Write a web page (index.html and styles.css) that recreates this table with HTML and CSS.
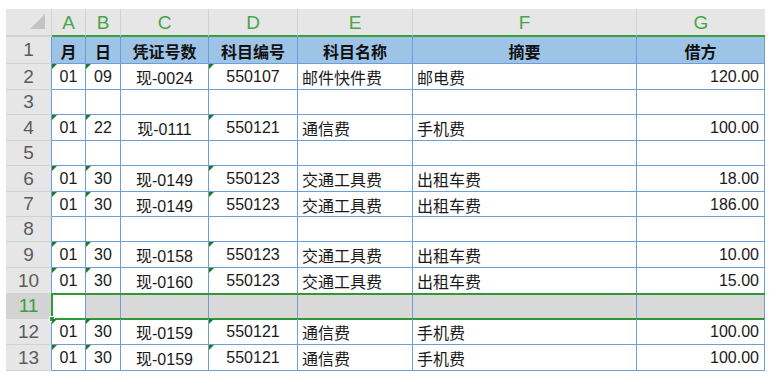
FILE: index.html
```html
<!DOCTYPE html>
<html lang="zh-CN">
<head>
<meta charset="utf-8">
<title>Sheet</title>
<link rel="stylesheet" href="styles.css">
</head>
<body>
<div class="sheet">
  <div class="row colhead">
    <div class="corner"><span class="corner-tri"></span></div>
    <div class="ch">A</div><div class="ch">B</div><div class="ch">C</div><div class="ch">D</div><div class="ch">E</div><div class="ch">F</div><div class="ch last">G</div>
  </div>

  <div class="row h27 title">
    <div class="rh">1</div>
    <div class="c ctr">月</div><div class="c ctr">日</div><div class="c ctr">凭证号数</div><div class="c ctr">科目编号</div><div class="c ctr">科目名称</div><div class="c ctr">摘要</div><div class="c ctr">借方</div>
  </div>

  <div class="row h26">
    <div class="rh">2</div>
    <div class="c ctr t">01</div><div class="c ctr t">09</div><div class="c ctr">现-0024</div><div class="c ctr t">550107</div><div class="c lft">邮件快件费</div><div class="c lft">邮电费</div><div class="c rgt">120.00</div>
  </div>

  <div class="row h25">
    <div class="rh">3</div>
    <div class="c"></div><div class="c"></div><div class="c"></div><div class="c"></div><div class="c"></div><div class="c"></div><div class="c"></div>
  </div>

  <div class="row h26">
    <div class="rh">4</div>
    <div class="c ctr t">01</div><div class="c ctr t">22</div><div class="c ctr">现-0111</div><div class="c ctr t">550121</div><div class="c lft">通信费</div><div class="c lft">手机费</div><div class="c rgt">100.00</div>
  </div>

  <div class="row h25">
    <div class="rh">5</div>
    <div class="c"></div><div class="c"></div><div class="c"></div><div class="c"></div><div class="c"></div><div class="c"></div><div class="c"></div>
  </div>

  <div class="row h26">
    <div class="rh">6</div>
    <div class="c ctr t">01</div><div class="c ctr t">30</div><div class="c ctr">现-0149</div><div class="c ctr t">550123</div><div class="c lft">交通工具费</div><div class="c lft">出租车费</div><div class="c rgt">18.00</div>
  </div>

  <div class="row h25">
    <div class="rh">7</div>
    <div class="c ctr t">01</div><div class="c ctr t">30</div><div class="c ctr">现-0149</div><div class="c ctr t">550123</div><div class="c lft">交通工具费</div><div class="c lft">出租车费</div><div class="c rgt">186.00</div>
  </div>

  <div class="row h25">
    <div class="rh">8</div>
    <div class="c"></div><div class="c"></div><div class="c"></div><div class="c"></div><div class="c"></div><div class="c"></div><div class="c"></div>
  </div>

  <div class="row h26">
    <div class="rh">9</div>
    <div class="c ctr t">01</div><div class="c ctr t">30</div><div class="c ctr">现-0158</div><div class="c ctr t">550123</div><div class="c lft">交通工具费</div><div class="c lft">出租车费</div><div class="c rgt">10.00</div>
  </div>

  <div class="row h26">
    <div class="rh">10</div>
    <div class="c ctr t">01</div><div class="c ctr t">30</div><div class="c ctr">现-0160</div><div class="c ctr t">550123</div><div class="c lft">交通工具费</div><div class="c lft">出租车费</div><div class="c rgt">15.00</div>
  </div>

  <div class="row h25 selrow">
    <div class="rh sel-rh">11</div>
    <div class="c active"></div><div class="c gray"></div><div class="c gray"></div><div class="c gray"></div><div class="c gray"></div><div class="c gray"></div><div class="c gray"></div>
    <div class="sel"><span class="handle"></span></div>
  </div>

  <div class="row h26">
    <div class="rh">12</div>
    <div class="c ctr t">01</div><div class="c ctr t">30</div><div class="c ctr">现-0159</div><div class="c ctr t">550121</div><div class="c lft">通信费</div><div class="c lft">手机费</div><div class="c rgt">100.00</div>
  </div>

  <div class="row h26">
    <div class="rh">13</div>
    <div class="c ctr t">01</div><div class="c ctr t">30</div><div class="c ctr">现-0159</div><div class="c ctr t">550121</div><div class="c lft">通信费</div><div class="c lft">手机费</div><div class="c rgt">100.00</div>
  </div>
</div>
</body>
</html>
```

FILE: styles.css
```css
html, body {
  margin: 0;
  padding: 0;
  background: #ffffff;
}

body {
  padding: 9px 7px 0 6px;
  font-family: "Liberation Sans", "Noto Sans CJK SC", sans-serif;
  font-size: 16px;
  color: #1a1a1a;
}

.sheet {
  display: flex;
  flex-direction: column;
  width: 759px;
}

.row {
  display: grid;
  grid-template-columns: 46px 34px 35px 88px 89px 115px 224px 128px;
}

.h25 { height: 25px; }
.h26 { height: 26px; }
.h27 { height: 27px; }

/* column header */
.colhead {
  height: 28px;
  background: #e6e6e6;
}

.corner {
  position: relative;
  border-right: 1px solid #d2d2d2;
  border-bottom: 2px solid #d2d2d2;
}

.corner-tri {
  position: absolute;
  right: 6px;
  bottom: 6px;
  width: 0;
  height: 0;
  border-left: 15px solid transparent;
  border-bottom: 15px solid #c3c3c3;
}

.ch {
  display: flex;
  align-items: center;
  justify-content: center;
  color: #48a548;
  font-size: 19px;
  border-right: 1px solid #d2d2d2;
  border-bottom: 2px solid #3e9e3e;
  padding-top: 1px;
}

.ch.last {
  border-right: none;
}

/* row header */
.rh {
  display: flex;
  align-items: center;
  justify-content: center;
  background: #e6e6e6;
  color: #5c5c5c;
  font-size: 19px;
  border-bottom: 1px solid #d2d2d2;
  border-right: 1px solid #6b9fd6;
}

.sel-rh {
  background: #d3d3d3;
  color: #3e9e3e;
}

/* cells */
.c {
  position: relative;
  display: flex;
  align-items: center;
  border-right: 1px solid #6b9fd6;
  border-bottom: 1px solid #6b9fd6;
  white-space: nowrap;
  overflow: hidden;
  padding-top: 1px;
}

.ctr { justify-content: center; }
.lft { justify-content: flex-start; padding-left: 4px; }
.rgt { justify-content: flex-end; padding-right: 5px; }

.title .c {
  background: #9dc3e6;
  font-weight: bold;
  color: #111111;
}

.t::before {
  content: "";
  position: absolute;
  top: 0;
  left: 0;
  width: 0;
  height: 0;
  border-top: 5px solid #1f7a2a;
  border-right: 5px solid transparent;
}

/* selected row 11 */
.selrow {
  position: relative;
}

.gray { background: #d9d9d9; }
.active { background: #ffffff; }

.sel {
  position: absolute;
  top: -1px;
  bottom: -1px;
  left: 45px;
  right: 0;
  border: 2px solid #2f9a35;
  border-right: none;
}

.handle {
  position: absolute;
  left: -4px;
  bottom: -4px;
  width: 4px;
  height: 4px;
  background: #2f9a35;
  border: 1px solid #ffffff;
}
```
